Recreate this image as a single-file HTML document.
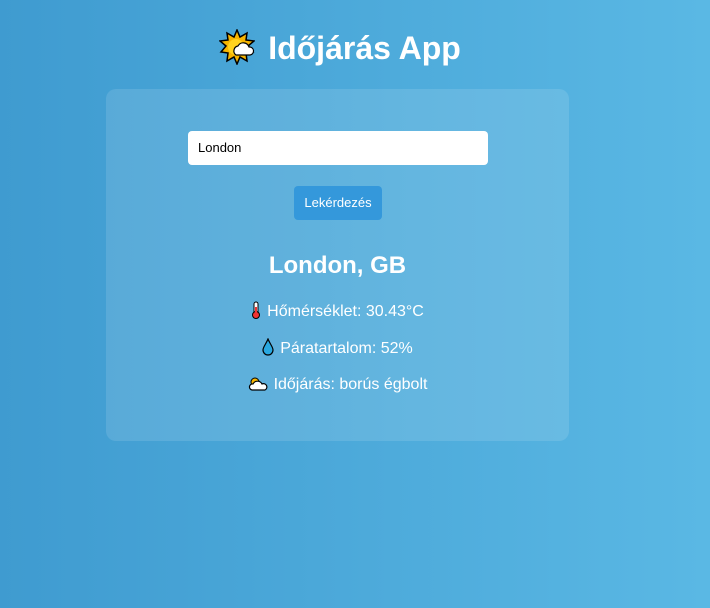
<!DOCTYPE html>
<html><head><meta charset="utf-8"><style>
*{margin:0;padding:0;box-sizing:border-box}
body{width:710px;height:608px;overflow:hidden;background:linear-gradient(90deg,#3f9bd0,#5ab8e4);font-family:"Liberation Sans",Arial,sans-serif;color:#fff;position:relative}
h1{position:absolute;top:28px;left:0;width:710px;padding-right:30px;text-align:center;font-size:32px;font-weight:bold;line-height:40px}
h1 svg{vertical-align:-6px;margin-right:13px}
.card{position:absolute;left:106px;top:89px;width:463px;height:352px;background:rgba(255,255,255,0.12);border-radius:10px}
.inp{position:absolute;left:82px;top:42px;width:300px;height:34px;background:#fff;border-radius:4px;color:#000;font-size:13px;line-height:34px;padding-left:10px}
.btn{position:absolute;left:188px;top:97px;width:88px;height:34px;background:#3498db;border-radius:4px;font-size:13px;line-height:34px;text-align:center}
h2{position:absolute;top:162px;left:0;width:463px;text-align:center;font-size:24px;font-weight:bold;line-height:30px}
.l{position:absolute;left:0;width:463px;text-align:center;font-size:16px;line-height:20px}
.l svg{vertical-align:-3px;margin-right:6px}
</style></head><body>
<h1><svg width="36" height="36" viewBox="0 0 36 36"><polygon points="18,1 21,8 28,4 27,11 35,12 29,17 34,23 27,24 28,32 21,28 18,35 15,28 8,32 9,24 2,23 7,17 1,12 9,11 8,4 15,8" fill="#f7b500" stroke="#000" stroke-width="1.5"/><circle cx="17" cy="18" r="8" fill="#ffd21e"/><path d="M17 26a5 5 0 0 1 2-9a6 6 0 0 1 11 1a4 4 0 0 1 1 8z" fill="#fff" stroke="#000" stroke-width="1.2"/></svg>Időjárás App</h1>
<div class="card">
<div class="inp">London</div>
<div class="btn">Lekérdezés</div>
<h2>London, GB</h2>
<div class="l" style="top:212px"><svg width="10" height="18" viewBox="0 0 10 18"><rect x="3" y="1" width="4" height="12" rx="2" fill="#fff" stroke="#000"/><circle cx="5" cy="14" r="3.5" fill="#e33" stroke="#000"/><rect x="4" y="6" width="2" height="8" fill="#e33"/></svg>Hőmérséklet: 30.43°C</div>
<div class="l" style="top:249px"><svg width="12" height="18" viewBox="0 0 12 18"><path d="M6 1C4 6 1 9 1 12a5 5 0 0 0 10 0C11 9 8 6 6 1z" fill="#29a8e0" stroke="#000" stroke-width="1.2"/></svg>Páratartalom: 52%</div>
<div class="l" style="top:286px"><svg width="20" height="16" viewBox="0 0 20 16"><circle cx="7" cy="6" r="4" fill="#f7b500" stroke="#000"/><path d="M4 14a3 3 0 0 1 1-6a5 5 0 0 1 9 0a3 3 0 0 1 3 6z" fill="#fff" stroke="#000" stroke-width="1.2"/></svg>Időjárás: borús égbolt</div>
</div>
</body></html>
